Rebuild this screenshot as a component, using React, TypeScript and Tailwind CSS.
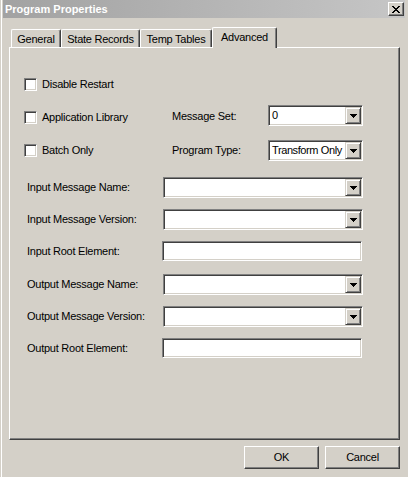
import React from "react";

const raisedBtn =
  "border border-t-white border-l-white border-r-[#404040] border-b-[#404040] shadow-[inset_-1px_-1px_0_#808080] bg-[#d4d0c8]";
const raisedArrow =
  "border border-t-[#d4d0c8] border-l-[#d4d0c8] border-r-[#404040] border-b-[#404040] shadow-[inset_1px_1px_0_#ffffff,inset_-1px_-1px_0_#808080] bg-[#d4d0c8]";
const sunken =
  "border border-t-[#808080] border-l-[#808080] border-r-white border-b-white shadow-[inset_1px_1px_0_#404040,inset_-1px_-1px_0_#d4d0c8] bg-white";

function Arrow() {
  return (
    <div className={`${raisedArrow} w-[16px] h-full flex items-center justify-center`}>
      <svg width="7" height="4" viewBox="0 0 7 4" shapeRendering="crispEdges">
        <path d="M0 0h7v1h-1v1h-1v1h-1v1h-1v-1h-1v-1h-1v-1h-1z" fill="#000" />
      </svg>
    </div>
  );
}

function Combo({ className, value }: { className: string; value?: string }) {
  return (
    <div className={`${sunken} h-[21px] p-px flex items-stretch ${className}`}>
      <div className="flex-1 pl-[2px] flex items-center overflow-hidden whitespace-nowrap tracking-[-0.4px]">{value}</div>
      <Arrow />
    </div>
  );
}

function Edit({ className }: { className: string }) {
  return <div className={`${sunken} h-[20px] ${className}`} />;
}

function Check({ label }: { label: string }) {
  return (
    <div className="flex items-center">
      <div className={`${sunken} w-[13px] h-[13px]`} />
      <span className="ml-[5px]">{label}</span>
    </div>
  );
}

function Tab({ label, w, selected }: { label: string; w: string; selected?: boolean }) {
  if (selected) {
    return (
      <div
        className={`${w} h-[21px] -mb-px relative z-10 bg-[#d4d0c8] border-t border-l border-white border-r border-r-[#404040] shadow-[inset_-1px_0_0_#808080] rounded-t-[2px] flex justify-center pt-[3px]`}
      >
        {label}
      </div>
    );
  }
  return (
    <div
      className={`${w} h-[18px] bg-[#d4d0c8] border-t border-l border-white border-r border-r-[#404040] shadow-[inset_-1px_0_0_#808080] rounded-t-[2px] flex justify-center pt-[3px]`}
    >
      {label}
    </div>
  );
}

function LabeledRow({
  label,
  mt,
  children,
}: {
  label: string;
  mt: string;
  children: React.ReactNode;
}) {
  return (
    <div className={`flex items-center pl-[17px] ${mt}`}>
      <div className="w-[136px] whitespace-nowrap">{label}</div>
      {children}
    </div>
  );
}

export default function App() {
  return (
    <div className="w-[408px] h-[477px] bg-[#d4d0c8] overflow-hidden text-[11px] leading-[13px] tracking-[-0.25px] text-black font-['Liberation_Sans',Arial,sans-serif]">
      <div className="ml-px h-full border-l border-white pl-px flex flex-col">
        {/* Title bar */}
        <div className="h-[18px] w-[402px] flex items-center bg-gradient-to-r from-[#a2a2a2] to-[#c6c6c6] pl-[2px] pr-px">
          <span className="font-bold text-white tracking-normal">Program Properties</span>
          <div className={`${raisedBtn} ml-auto w-[16px] h-[14px] flex items-center justify-center`}>
            <svg width="8" height="7" viewBox="0 0 8 7" shapeRendering="crispEdges">
              <path
                d="M0 0h2v1h1v1h2v-1h1v-1h2v1h-1v1h-1v1h-1v1h1v1h1v1h1v1h-2v-1h-1v-1h-2v1h-1v1h-2v-1h1v-1h1v-1h1v-1h-1v-1h-1v-1h-1z"
                fill="#000"
              />
            </svg>
          </div>
        </div>

        {/* Tabs + panel */}
        <div className="ml-[6px] mt-[9px] w-[391px]">
          <div className="flex items-end h-[20px] pl-[2px]">
            <Tab label="General" w="w-[50px]" />
            <Tab label="State Records" w="w-[79px]" />
            <Tab label="Temp Tables" w="w-[72px]" />
            <Tab label="Advanced" w="w-[65px]" selected />
          </div>
          <div className="h-[393px] border-t border-l border-white border-r border-b border-r-[#404040] border-b-[#404040] shadow-[inset_-1px_-1px_0_#808080] flex flex-col">
            <div className="mt-[30px] pl-[14px] h-[13px] flex items-center">
              <Check label="Disable Restart" />
            </div>

            <div className="mt-[14px] pl-[14px] h-[21px] flex items-center">
              <div className="w-[148px] pt-[4px]">
                <Check label="Application Library" />
              </div>
              <div className="w-[96px] pt-[2px]">Message Set:</div>
              <Combo className="w-[95px]" value="0" />
            </div>

            <div className="mt-[14px] pl-[14px] h-[21px] flex items-center">
              <div className="w-[148px]">
                <Check label="Batch Only" />
              </div>
              <div className="w-[96px]">Program Type:</div>
              <Combo className="w-[95px]" value="Transform Only" />
            </div>

            <LabeledRow label="Input Message Name:" mt="mt-[16px]">
              <Combo className="w-[200px]" />
            </LabeledRow>
            <LabeledRow label="Input Message Version:" mt="mt-[11px]">
              <Combo className="w-[200px]" />
            </LabeledRow>
            <LabeledRow label="Input Root Element:" mt="mt-[11px]">
              <Edit className="w-[200px] -ml-px" />
            </LabeledRow>
            <LabeledRow label="Output Message Name:" mt="mt-[13px]">
              <Combo className="w-[200px]" />
            </LabeledRow>
            <LabeledRow label="Output Message Version:" mt="mt-[11px]">
              <Combo className="w-[200px]" />
            </LabeledRow>
            <LabeledRow label="Output Root Element:" mt="mt-[11px]">
              <Edit className="w-[200px] -ml-px" />
            </LabeledRow>
          </div>

          <div className="mt-[6px] flex justify-end gap-[6px]">
            <div className={`${raisedBtn} w-[75px] h-[23px] flex items-center justify-center`}>OK</div>
            <div className={`${raisedBtn} w-[75px] h-[23px] flex items-center justify-center`}>Cancel</div>
          </div>
        </div>
      </div>
    </div>
  );
}
